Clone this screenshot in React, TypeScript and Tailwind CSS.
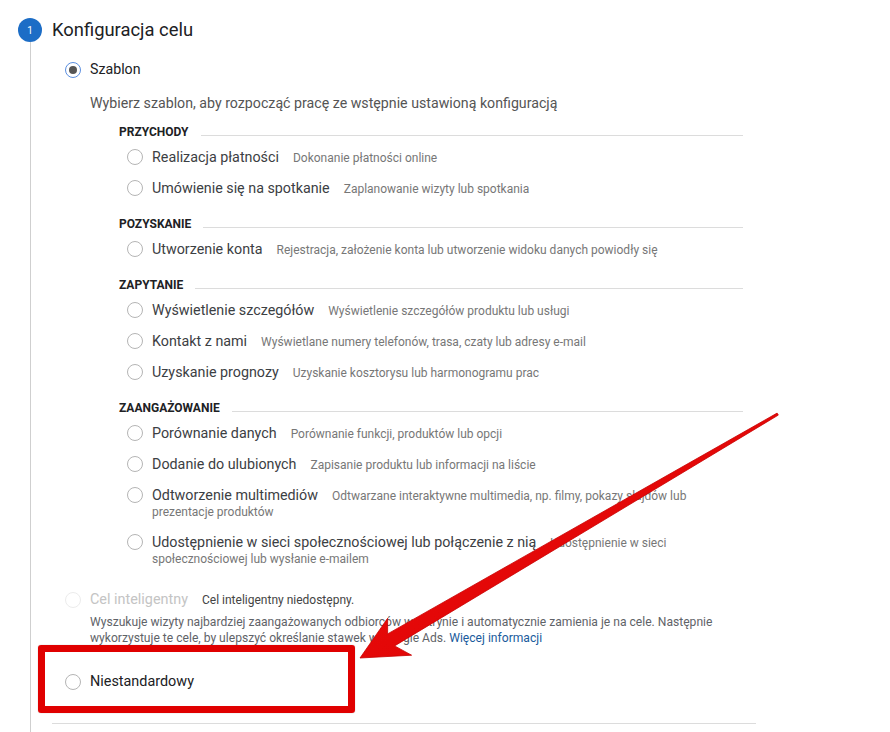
import React from 'react'

type Goal = { label: string; desc: string }
type Group = { title: string; goals: Goal[] }

const groups: Group[] = [
  {
    title: 'PRZYCHODY',
    goals: [
      { label: 'Realizacja płatności', desc: 'Dokonanie płatności online' },
      { label: 'Umówienie się na spotkanie', desc: 'Zaplanowanie wizyty lub spotkania' },
    ],
  },
  {
    title: 'POZYSKANIE',
    goals: [
      {
        label: 'Utworzenie konta',
        desc: 'Rejestracja, założenie konta lub utworzenie widoku danych powiodły się',
      },
    ],
  },
  {
    title: 'ZAPYTANIE',
    goals: [
      { label: 'Wyświetlenie szczegółów', desc: 'Wyświetlenie szczegółów produktu lub usługi' },
      { label: 'Kontakt z nami', desc: 'Wyświetlane numery telefonów, trasa, czaty lub adresy e-mail' },
      { label: 'Uzyskanie prognozy', desc: 'Uzyskanie kosztorysu lub harmonogramu prac' },
    ],
  },
  {
    title: 'ZAANGAŻOWANIE',
    goals: [
      { label: 'Porównanie danych', desc: 'Porównanie funkcji, produktów lub opcji' },
      { label: 'Dodanie do ulubionych', desc: 'Zapisanie produktu lub informacji na liście' },
      {
        label: 'Odtworzenie multimediów',
        desc: 'Odtwarzane interaktywne multimedia, np. filmy, pokazy slajdów lub prezentacje produktów',
      },
      {
        label: 'Udostępnienie w sieci społecznościowej lub połączenie z nią',
        desc: 'Udostępnienie w sieci społecznościowej lub wysłanie e-mailem',
      },
    ],
  },
]

function Radio({ checked, disabled }: { checked?: boolean; disabled?: boolean }) {
  if (checked) {
    return (
      <span className="flex h-4 w-4 shrink-0 items-center justify-center rounded-full border-[1.5px] border-[#5b8fe0]">
        <span className="h-[8px] w-[8px] rounded-full bg-[#555]" />
      </span>
    )
  }
  return (
    <span
      className={
        disabled
          ? 'h-4 w-4 shrink-0 rounded-full border border-[#ececec]'
          : 'h-4 w-4 shrink-0 rounded-full border border-[#b5b5b5]'
      }
    />
  )
}

export default function App() {
  return (
    <div className="relative h-[732px] w-[890px] overflow-hidden bg-white font-['Roboto',sans-serif] text-[#3c4043]">
      <div className="flex h-full pl-[18px] pt-[18px]">
        {/* step marker */}
        <div className="flex w-6 shrink-0 flex-col items-center">
          <div className="flex h-6 w-6 items-center justify-center rounded-full bg-[#1c6dc6] text-[10px] text-white">
            1
          </div>
          <div className="w-px flex-1 bg-[#cfcfcf]" />
        </div>

        <div className="ml-[10px] flex-1">
          <h2 className="text-[18.4px] leading-6 text-[#202124]">Konfiguracja celu</h2>

          {/* Szablon */}
          <div className="ml-[13px] mt-[16px] flex h-6 items-center gap-[9px]">
            <Radio checked />
            <span className="text-[14.2px] text-[#202124]">Szablon</span>
          </div>

          <div className="ml-[38px]">
            <p className="mt-[11px] text-[14.2px] leading-5 text-[#555]">
              Wybierz szablon, aby rozpocząć pracę ze wstępnie ustawioną konfiguracją
            </p>

            <div className="ml-[29px] w-[624px]">
              {groups.map((g, gi) => (
                <div key={g.title} className={gi === 0 ? 'mt-[11px]' : 'mt-[12.5px]'}>
                  <div className="flex h-4 items-center">
                    <span className="text-[12px] font-bold leading-4 text-[#202124]">{g.title}</span>
                    <span className="ml-3 mt-[7px] h-px flex-1 bg-[#dcdcdc]" />
                  </div>
                  <div className="mt-[1.5px]">
                    {g.goals.map((goal) => (
                      <div key={goal.label} className="flex items-start gap-[9px] py-[7.5px] pl-2">
                        <Radio />
                        <p className="text-[14.3px] leading-4">
                          <span className="mr-[14px] text-[#3c4043]">{goal.label}</span>
                          <span className="text-[12px] leading-3 text-[#777]">{goal.desc}</span>
                        </p>
                      </div>
                    ))}
                  </div>
                </div>
              ))}
            </div>
          </div>

          {/* Cel inteligentny */}
          <div className="ml-[13px] mt-[16px] flex h-5 items-center gap-[9px]">
            <Radio disabled />
            <span className="text-[14.4px] text-[#c4c4c4]">Cel inteligentny</span>
            <span className="ml-[5px] text-[12px] text-[#444]">Cel inteligentny niedostępny.</span>
          </div>
          <p className="ml-[38px] mt-1 text-[12.1px] leading-4 text-[#5f6368]">
            Wyszukuje wizyty najbardziej zaangażowanych odbiorców w witrynie i automatycznie zamienia je na cele. Następnie
            <br />
            wykorzystuje te cele, by ulepszyć określanie stawek w Google Ads.{' '}
            <span className="text-[#1a5b9c]">Więcej informacji</span>
          </p>

          {/* Niestandardowy */}
          <div className="ml-[13px] mt-[26px] flex h-5 items-center gap-[9px]">
            <Radio />
            <span className="text-[14.4px] text-[#202124]">Niestandardowy</span>
          </div>

          <div className="mt-[31px] h-px w-[704px] bg-[#dcdcdc]" />
        </div>
      </div>

      {/* annotation: red frame */}
      <div className="absolute left-[38px] top-[645px] h-[68px] w-[317px] rounded-[3px] border-[7px] border-[#e00000] shadow-[0_0_1px_rgba(0,0,0,0.4)]" />

      {/* annotation: arrow */}
      <svg className="absolute left-0 top-0" width="890" height="732" viewBox="0 0 890 732">
        <defs>
          <linearGradient id="arrowFill" x1="0" y1="0" x2="1" y2="1">
            <stop offset="0" stopColor="#f01010" />
            <stop offset="1" stopColor="#d80000" />
          </linearGradient>
        </defs>
        <polygon
          points="360,658 411.6,655.2 394.6,645.9 778.3,415.1 777.1,413.1 387.6,633.9 387.7,618.2"
          fill="url(#arrowFill)"
          stroke="#c80000"
          strokeWidth="0.8"
          strokeLinejoin="round"
        />
      </svg>
    </div>
  )
}
